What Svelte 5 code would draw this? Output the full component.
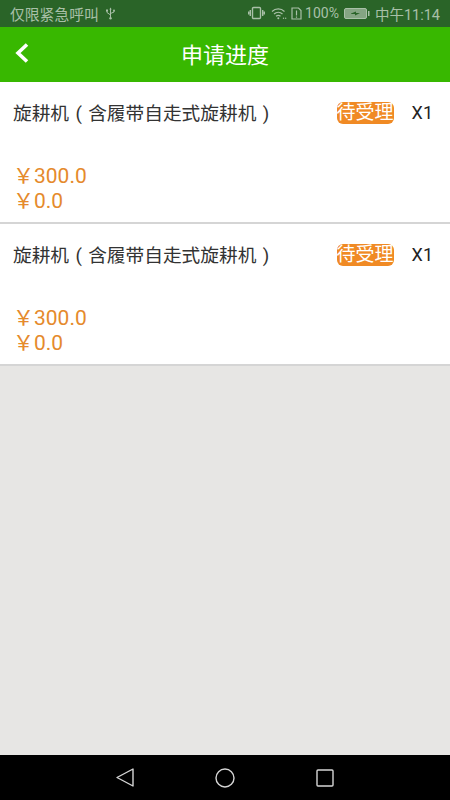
<script>
  const items = [
    { name: '旋耕机 ( 含履带自走式旋耕机 )', status: '待受理', count: 'X1', price: '300.0', paid: '0.0' },
    { name: '旋耕机 ( 含履带自走式旋耕机 )', status: '待受理', count: 'X1', price: '300.0', paid: '0.0' }
  ];
</script>

<div class="page">
  <div class="status">
    <div class="status-left">
      <span>仅限紧急呼叫</span>
      <svg width="11" height="13" viewBox="0 0 11 13" fill="none" stroke="currentColor" stroke-width="1">
        <path d="M5.500 2v9M2 4v1.500l3.500 2.500M9 4v1l-3.500 1.500"/>
        <path d="M5.500 0.500l-1.200 2h2.400z" fill="currentColor" stroke="none"/>
        <circle cx="5.500" cy="11.300" r="1.200" fill="currentColor" stroke="none"/>
        <rect x="1" y="2.500" width="2" height="2" fill="currentColor" stroke="none"/>
        <circle cx="9" cy="3.500" r="1" fill="currentColor" stroke="none"/>
      </svg>
    </div>
    <div class="status-right">
      <svg width="17" height="14" viewBox="0 0 17 14" fill="none" stroke="currentColor" stroke-width="1.400">
        <rect x="4.500" y="1.500" width="8" height="11" rx="1"/>
        <path d="M2.300 4v6M0.700 5.500v3M14.700 4v6M16.300 5.500v3"/>
      </svg>
      <svg class="wifi" width="17" height="13" viewBox="0 0 17 13" fill="none" stroke="currentColor" stroke-width="1.200">
        <path d="M1 4.500c3.500-3.400 9-3.400 12.500 0M3 7c2.500-2.300 6-2.300 8.500 0M5 9.300c1.400-1.200 3.200-1.200 4.500 0"/>
        <circle cx="7.300" cy="11.300" r="1" fill="currentColor" stroke="none"/>
        <circle cx="12.500" cy="11.300" r="0.700" fill="currentColor" stroke="none"/>
        <circle cx="14.700" cy="11.300" r="0.700" fill="currentColor" stroke="none"/>
      </svg>
      <svg class="sim" width="11" height="13" viewBox="0 0 11 13" fill="none" stroke="currentColor" stroke-width="1.200">
        <path d="M1 1h6.500L10 3.500V12H1zM5.500 3.500v5M5.500 9.500v1.200"/>
      </svg>
      <span class="pct">100%</span>
      <svg class="batt" width="26" height="11" viewBox="0 0 26 11">
        <rect x="0.500" y="0.500" width="22" height="10" rx="1.500" fill="#85a583" stroke="#a9c0a8"/>
        <rect x="24" y="3" width="1.500" height="5" fill="#a9c0a8"/>
        <path d="M7 5.500l5-2v1.500h4l-5 2.500v-1.500H7z" fill="#2a6428"/>
      </svg>
      <span class="clock">中午11:14</span>
    </div>
  </div>

  <header class="bar">
    <svg class="back" width="16" height="22" viewBox="0 0 16 22" fill="none" stroke="#fff" stroke-width="3.600">
      <path d="M13 2.500L4 11l9 8.500"/>
    </svg>
    <h1>申请进度</h1>
  </header>

  <main class="list">
    {#each items as item}
      <section class="card">
        <div class="top">
          <span class="name">{item.name}</span>
          <span class="badge">{item.status}</span>
          <span class="count">{item.count}</span>
        </div>
        <div class="prices">
          <div><span class="yen">￥</span>{item.price}</div>
          <div><span class="yen">￥</span>{item.paid}</div>
        </div>
      </section>
    {/each}
  </main>

  <nav class="nav">
    <svg width="18" height="19" viewBox="0 0 18 19" fill="none" stroke="#d6d6d6" stroke-width="1.400" stroke-linejoin="round">
      <path d="M17 1v17L1 9.500z"/>
    </svg>
    <svg width="20" height="20" viewBox="0 0 20 20" fill="none" stroke="#d6d6d6" stroke-width="1.400">
      <circle cx="10" cy="10" r="9"/>
    </svg>
    <svg width="18" height="18" viewBox="0 0 18 18" fill="none" stroke="#d6d6d6" stroke-width="1.400" stroke-linejoin="round">
      <rect x="1" y="1" width="16" height="16" rx="1"/>
    </svg>
  </nav>
</div>

<style>
  :global(body) {
    margin: 0;
  }

  .page {
    width: 450px;
    height: 800px;
    display: flex;
    flex-direction: column;
    background: #e7e6e4;
    font-family: "Roboto", "Noto Sans CJK SC", sans-serif;
    overflow: hidden;
  }

  .status {
    height: 27px;
    box-sizing: border-box;
    padding: 0 10px 1px 10px;
    display: flex;
    align-items: center;
    justify-content: space-between;
    background: #2a6428;
    color: #a9c0a8;
    font-size: 14.500px;
  }

  .status-left,
  .status-right {
    display: flex;
    align-items: center;
  }

  .status-left {
    font-size: 14.800px;
  }

  .status-left svg {
    margin-left: 6px;
  }

  .status-right svg {
    flex: none;
  }

  .wifi {
    margin-left: 6px;
  }

  .sim {
    margin-left: 3px;
  }

  .pct {
    margin-left: 3px;
    font-size: 14px;
  }

  .batt {
    margin-left: 5px;
  }

  .clock {
    margin-left: 5px;
  }

  .bar {
    height: 55px;
    flex: none;
    position: relative;
    display: flex;
    align-items: center;
    justify-content: center;
    padding-bottom: 3px;
    box-sizing: border-box;
    background: #38b800;
  }

  .bar h1 {
    margin: 0;
    color: #fff;
    font-size: 22px;
    font-weight: 400;
  }

  .back {
    position: absolute;
    left: 14px;
    top: 15px;
  }

  .list {
    flex: 1;
  }

  .card {
    height: 142px;
    box-sizing: border-box;
    padding: 0 17px 0 13px;
    display: flex;
    flex-direction: column;
    background: #fff;
    border-bottom: 2px solid #d5d5d5;
  }

  .top {
    height: 61px;
    display: flex;
    align-items: center;
    color: #333;
    font-size: 18.700px;
  }

  .name {
    flex: 1;
    white-space: nowrap;
    word-spacing: 1.700px;
    margin-top: -2px;
  }

  .badge {
    width: 57px;
    height: 22px;
    line-height: 22px;
    text-align: center;
    border-radius: 6px;
    background: #f08a24;
    color: #fff;
    font-size: 19px;
  }

  .count {
    margin-left: 18px;
    color: #222;
    font-size: 18px;
  }

  .prices {
    margin-top: 21px;
    color: #e58a2c;
    font-size: 21px;
    line-height: 25px;
  }

  .nav {
    height: 45px;
    flex: none;
    display: flex;
    align-items: center;
    justify-content: space-between;
    padding: 0 116px;
    background: #000;
  }
</style>
